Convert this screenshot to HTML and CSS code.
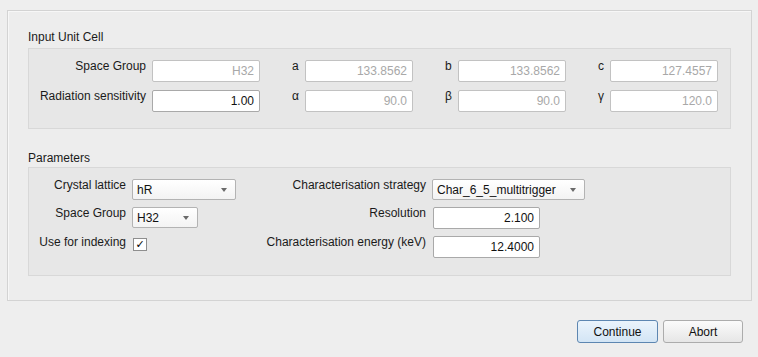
FILE: index.html
```html
<!DOCTYPE html>
<html lang="en">
<head>
    <meta charset="UTF-8">
    <title>Characterisation Parameters</title>
    <link rel="stylesheet" href="styles.css">
</head>
<body>
    <div class="panel">
        <div class="section-title">Input Unit Cell</div>
        <div class="group cell-grid">
            <div class="lbl">Space Group</div>
            <div class="field disabled">H32</div>
            <div class="sym">a</div>
            <div class="field disabled">133.8562</div>
            <div class="sym">b</div>
            <div class="field disabled">133.8562</div>
            <div class="sym">c</div>
            <div class="field disabled">127.4557</div>

            <div class="lbl">Radiation sensitivity</div>
            <div class="field">1.00</div>
            <div class="sym">α</div>
            <div class="field disabled">90.0</div>
            <div class="sym">β</div>
            <div class="field disabled">90.0</div>
            <div class="sym">γ</div>
            <div class="field disabled">120.0</div>
        </div>

        <div class="section-title params-title">Parameters</div>
        <div class="group param-grid">
            <div class="lbl">Crystal lattice</div>
            <div class="combo lattice">hR</div>
            <div class="lbl">Characterisation strategy</div>
            <div class="combo strategy">Char_6_5_multitrigger</div>

            <div class="lbl">Space Group</div>
            <div class="combo group-combo">H32</div>
            <div class="lbl">Resolution</div>
            <div class="field short">2.100</div>

            <div class="lbl">Use for indexing</div>
            <div class="check">&#10003;</div>
            <div class="lbl">Characterisation energy (keV)</div>
            <div class="field short">12.4000</div>
        </div>
    </div>

    <div class="buttons">
        <button class="btn primary">Continue</button>
        <button class="btn">Abort</button>
    </div>
</body>
</html>
```

FILE: styles.css
```css
body, html {
    margin: 0;
    padding: 0;
    background: #eeeeee;
    font-family: "Liberation Sans", Arial, sans-serif;
    font-size: 12px;
    line-height: 14px;
    color: #1a1a1a;
    overflow: hidden;
}
.panel {
    margin: 10px 6px 0 7px;
    padding: 19px 20px 24px;
    border: 1px solid #d3d3d3;
    box-shadow: inset 1px 1px 0 #f7f7f7;
    background: #ededed;
}
.section-title {
    margin-bottom: 4px;
}
.params-title {
    margin-top: 22px;
    margin-bottom: 2px;
}
.group {
    border: 1px solid #d8d8d8;
    background: #e7e7e7;
    padding-top: 11px;
    display: grid;
}
.cell-grid {
    grid-template-columns: 123px 108px 45px 108px 45px 108px 44px 108px;
    grid-template-rows: 22px 22px;
    row-gap: 8px;
    padding-bottom: 16px;
}
.param-grid {
    grid-template-columns: 103px 130px 170px auto;
    grid-template-rows: 21px 22px 22px;
    row-gap: 7px;
    padding-bottom: 17px;
}
.lbl {
    text-align: right;
    padding-right: 6px;
    margin-top: -1px;
    white-space: nowrap;
}
.sym {
    padding-left: 32px;
    margin-top: -1px;
}
.field {
    box-sizing: border-box;
    height: 22px;
    width: 108px;
    border: 1px solid #a9a9a9;
    border-radius: 2px;
    background: #ffffff;
    text-align: right;
    padding: 3px 5px 0 0;
    color: #111;
}
.field.disabled {
    border-color: #c2c2c2;
    color: #a8a8a8;
}
.field.short {
    width: 107px;
    margin-left: 1px;
}
.combo {
    position: relative;
    box-sizing: border-box;
    height: 21px;
    border: 1px solid #b3b3b3;
    border-radius: 2px;
    background: linear-gradient(#ffffff, #f3f3f3);
    padding: 3px 0 0 4px;
    color: #111;
}
.combo::after {
    content: "";
    position: absolute;
    right: 8px;
    top: 8px;
    border-left: 3.5px solid transparent;
    border-right: 3.5px solid transparent;
    border-top: 4px solid #6a6a6a;
}
.lattice {
    width: 104px;
}
.group-combo {
    width: 66px;
}
.strategy {
    width: 153px;
}
.check {
    box-sizing: border-box;
    width: 14px;
    height: 13px;
    margin-top: 2px;
    margin-left: 1px;
    border: 1px solid #8e8e8e;
    background: #ffffff;
    font-family: "DejaVu Sans", sans-serif;
    font-size: 11px;
    font-weight: bold;
    line-height: 11px;
    text-align: center;
    color: #000;
}
.buttons {
    display: flex;
    justify-content: flex-end;
    gap: 5px;
    margin: 19px 15px 0 0;
}
.btn {
    box-sizing: border-box;
    width: 80px;
    height: 23px;
    border: 1px solid #acacac;
    border-radius: 3px;
    background: linear-gradient(#fbfbfb, #e6e6e6);
    font-family: "Liberation Sans", Arial, sans-serif;
    font-size: 12px;
    color: #111;
    padding: 0;
}
.btn.primary {
    width: 81px;
    border-color: #5d86b1;
    background: linear-gradient(#ebf4fc, #d3e5f5);
}
```
